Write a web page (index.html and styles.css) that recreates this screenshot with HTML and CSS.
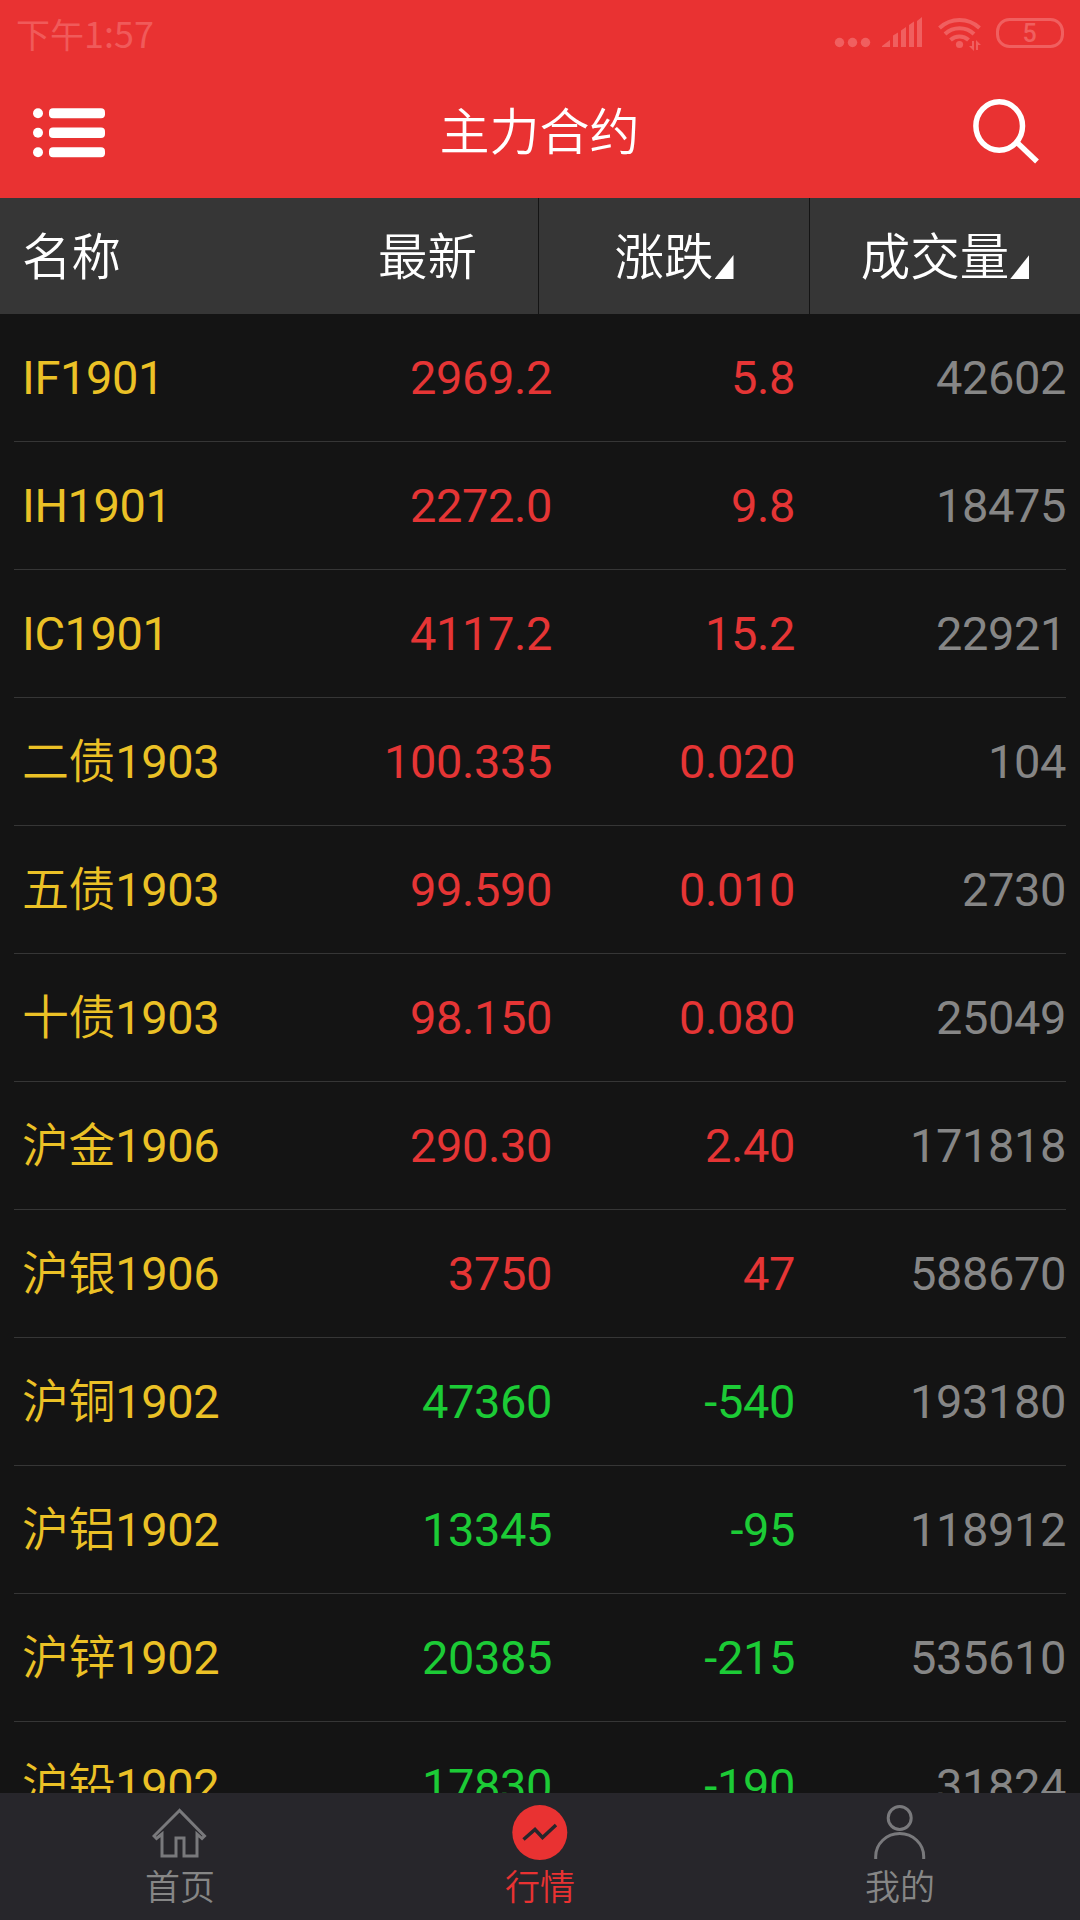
FILE: index.html
```
<!DOCTYPE html>
<html lang="zh-CN">
<head>
    <meta charset="UTF-8">
    <meta name="viewport" content="width=device-width, initial-scale=1.0">
    <title>主力合约</title>
    <link rel="stylesheet" href="styles.css">
</head>
<body>
    <div class="status-bar">
        <span class="time">下午<b>1:57</b></span>
        <svg class="status-icons" width="232" height="36" viewBox="0 0 232 36">
            <!-- Dots -->
            <circle cx="6.5" cy="25.500" r="4.7"/>
            <circle cx="19.5" cy="25.500" r="4.7"/>
            <circle cx="32.5" cy="25.500" r="4.7"/>
            <!-- Signal -->
            <path d="M49 30v-1l8-6v7zM60 30V18.500l5-3V30zM68 30V13.500l5-3.500V30zM76 30V8l5-3.500V30zM84 30V4l5-4v30z"/>
            <!-- Wifi -->
            <path class="line" d="M106.500 11a29 29 0 0 1 40 0M112 17a21 21 0 0 1 29 0M117.500 23a13 13 0 0 1 18 0"/>
            <circle cx="126.500" cy="27.500" r="3.600"/>
            <path d="M139 24h2v10l-5-5h3zM143 33V23l5 5h-3v5z"/>
            <!-- Battery -->
            <rect class="line thin" x="164.500" y="2.500" width="65" height="27" rx="12"/>
            <text x="196.500" y="24.500" text-anchor="middle">5</text>
        </svg>
    </div>

    <div class="title-bar">
        <svg class="menu-icon" width="72" height="50" viewBox="0 0 72 50">
            <circle cx="5" cy="5.300" r="5"/>
            <circle cx="5" cy="24.800" r="5"/>
            <circle cx="5" cy="44.300" r="5"/>
            <rect x="16" y="0.300" width="56" height="10" rx="4"/>
            <rect x="16" y="19.500" width="56" height="10.500" rx="4"/>
            <rect x="16" y="39.300" width="56" height="10" rx="4"/>
        </svg>
        <h1>主力合约</h1>
        <svg class="search-icon" width="66" height="66" viewBox="0 0 66 66">
            <ellipse cx="26.200" cy="27" rx="23.300" ry="24.200"/>
            <path d="M44 43.500L64 62.500"/>
        </svg>
    </div>

    <div class="table-head">
        <div class="name">名称</div>
        <div class="last">最新</div>
        <div class="change">涨跌<i class="sort"></i></div>
        <div class="volume">成交量<i class="sort"></i></div>
    </div>

    <div class="quotes">
        <div class="row up"><span class="name">IF1901</span><span>2969.2</span><span>5.8</span><span class="vol">42602</span></div>
        <div class="row up"><span class="name">IH1901</span><span>2272.0</span><span>9.8</span><span class="vol">18475</span></div>
        <div class="row up"><span class="name">IC1901</span><span>4117.2</span><span>15.2</span><span class="vol">22921</span></div>
        <div class="row up"><span class="name"><b>二债</b>1903</span><span>100.335</span><span>0.020</span><span class="vol">104</span></div>
        <div class="row up"><span class="name"><b>五债</b>1903</span><span>99.590</span><span>0.010</span><span class="vol">2730</span></div>
        <div class="row up"><span class="name"><b>十债</b>1903</span><span>98.150</span><span>0.080</span><span class="vol">25049</span></div>
        <div class="row up"><span class="name"><b>沪金</b>1906</span><span>290.30</span><span>2.40</span><span class="vol">171818</span></div>
        <div class="row up"><span class="name"><b>沪银</b>1906</span><span>3750</span><span>47</span><span class="vol">588670</span></div>
        <div class="row down"><span class="name"><b>沪铜</b>1902</span><span>47360</span><span>-540</span><span class="vol">193180</span></div>
        <div class="row down"><span class="name"><b>沪铝</b>1902</span><span>13345</span><span>-95</span><span class="vol">118912</span></div>
        <div class="row down"><span class="name"><b>沪锌</b>1902</span><span>20385</span><span>-215</span><span class="vol">535610</span></div>
        <div class="row down"><span class="name"><b>沪铅</b>1902</span><span>17830</span><span>-190</span><span class="vol">31824</span></div>
    </div>

    <div class="tab-bar">
        <div class="tab">
            <svg width="56" height="56" viewBox="0 0 56 56">
                <path d="M27.500 5.500L2 31l2.500 2.500 5.500-4.500v22h14V33h8v18h13V29l5 4.500 2.500-2.500z"/>
            </svg>
            <span>首页</span>
        </div>
        <div class="tab active">
            <svg width="56" height="56" viewBox="0 0 56 56">
                <circle cx="27.800" cy="27.600" r="27.500"/>
                <path d="M11.500 34.500L23 24.500l7.500 8L44 20"/>
            </svg>
            <span>行情</span>
        </div>
        <div class="tab">
            <svg width="56" height="56" viewBox="0 0 56 56">
                <circle cx="27.700" cy="13" r="11.500"/>
                <path d="M3.700 54v-2.500a24 23 0 0 1 48 0V54"/>
            </svg>
            <span>我的</span>
        </div>
    </div>
</body>
</html>
```

FILE: styles.css
```
/* Global Reset */
* {
    margin: 0;
    padding: 0;
    box-sizing: border-box;
}

body {
    width: 1080px;
    height: 1920px;
    display: flex;
    flex-direction: column;
    overflow: hidden;
    background-color: #141414;
    font-family: Roboto, 'Noto Sans CJK SC', sans-serif;
}

svg {
    display: block;
    flex-shrink: 0;
}

/* Status Bar */
.status-bar {
    height: 66px;
    flex-shrink: 0;
    display: flex;
    justify-content: space-between;
    padding: 17px 15px 0 16px;
    background-color: #e93232;
}

.time {
    font-family: 'Noto Sans CJK SC', sans-serif;
    font-size: 34px;
    font-weight: 400;
    line-height: 31px;
    color: #f05a5a;
}

.time b {
    font-size: 36px;
    font-weight: 400;
}

.status-icons {
    fill: #f05f5f;
}

.status-icons .line {
    fill: none;
    stroke: #f05f5f;
    stroke-width: 4;
}

.status-icons .thin {
    stroke-width: 3;
}

.status-icons text {
    font-size: 25px;
    font-weight: 500;
}

/* Title Bar */
.title-bar {
    height: 132px;
    flex-shrink: 0;
    display: flex;
    align-items: center;
    justify-content: space-between;
    padding: 0 41px 0 33px;
    background-color: #e93232;
    color: #fff;
}

.title-bar h1 {
    padding: 2px 0 0 1px;
    font-size: 50px;
    font-weight: 350;
    line-height: 60px;
}

.menu-icon {
    margin-top: 1px;
    fill: #fff;
}

.search-icon {
    margin-top: -1px;
    fill: none;
    stroke: #fff;
    stroke-width: 5.5;
}

/* Table Header */
.table-head {
    height: 116px;
    flex-shrink: 0;
    display: grid;
    grid-template-columns: 300px 239px 271px 270px;
    line-height: 120px;
    background-color: #363636;
    color: #fff;
    font-size: 49.5px;
    font-weight: 350;
}

.table-head .name {
    padding-left: 22px;
}

.table-head .last {
    text-align: right;
    padding-right: 61px;
    border-right: 1px solid #141414;
}

.table-head .change,
.table-head .volume {
    display: flex;
    justify-content: center;
}

.table-head .change {
    border-right: 1px solid #141414;
}

.sort {
    width: 19px;
    height: 24px;
    margin: 57px 0 0 1px;
    background-color: #fff;
    clip-path: polygon(100% 0, 100% 100%, 0 100%);
}

/* Quote Rows */
.quotes {
    flex: 1;
    min-height: 0;
    overflow: hidden;
    padding: 0 14px;
}

.row {
    height: 128px;
    display: grid;
    grid-template-columns: 286px 252px 243px 271px;
    border-bottom: 1px solid #363636;
    font-size: 47px;
    letter-spacing: -0.4px;
    line-height: 127px;
    text-align: right;
}

.row .name {
    padding-left: 8px;
    text-align: left;
    color: #ebc126;
}

.row .name b {
    font-weight: 350;
}

.row .vol {
    color: #868686;
}

.up {
    color: #e53535;
}

.down {
    color: #1ccb36;
}

/* Bottom Tabs */
.tab-bar {
    height: 127px;
    flex-shrink: 0;
    display: flex;
    background-color: #27262b;
}

.tab {
    flex: 1;
    display: flex;
    flex-direction: column;
    align-items: center;
    padding-top: 12px;
    font-size: 35px;
    font-weight: 350;
    line-height: 55px;
    color: #868686;
}

.tab svg {
    fill: none;
    stroke: #79797c;
    stroke-width: 3;
}

.tab.active {
    color: #e93232;
}

.tab.active circle {
    fill: #e93232;
    stroke: none;
}

.tab.active path {
    stroke: #27262b;
    stroke-width: 3.5;
}
```
